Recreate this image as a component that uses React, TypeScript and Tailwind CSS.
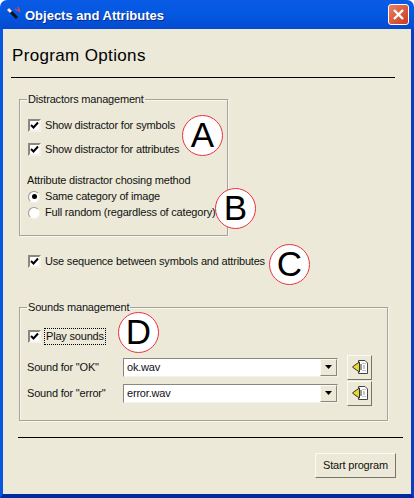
import type { ReactNode } from "react";

function Check({ label, focus }: { label: string; focus?: boolean }) {
  return (
    <div className="flex items-center h-[13px] whitespace-nowrap">
      <div className="w-[13px] h-[13px] shrink-0 bg-white border-2 border-t-[#8a887c] border-l-[#8a887c] border-r-[#f4f2ea] border-b-[#f4f2ea] flex items-center justify-center">
        <svg width="9" height="9" viewBox="0 0 9 9" className="shrink-0">
          <path d="M1 4 L3.5 6.5 L8 1.5" fill="none" stroke="#000" strokeWidth="2" />
        </svg>
      </div>
      <span className={focus ? "ml-[3px] px-[1px] border border-dotted border-black leading-[15px]" : "ml-[4px]"}>{label}</span>
    </div>
  );
}

function Radio({ label, on }: { label: string; on?: boolean }) {
  return (
    <div className="flex items-center h-[13px] whitespace-nowrap">
      <div className="w-[12px] h-[12px] shrink-0 rounded-full bg-white border border-t-[#9a988c] border-l-[#9a988c] border-r-[#f4f2ea] border-b-[#f4f2ea] flex items-center justify-center">
        {on && <div className="w-[5px] h-[5px] rounded-full bg-black" />}
      </div>
      <span className="ml-[5px]">{label}</span>
    </div>
  );
}

function Group({ title, className, children }: { title: string; className: string; children: ReactNode }) {
  return (
    <fieldset className={"border border-[#a5a398] shadow-[inset_1px_1px_0_#f8f6ee,1px_1px_0_#f8f6ee] " + className}>
      <legend className="-ml-[1px] px-[1px] leading-[14px] whitespace-nowrap">{title}</legend>
      {children}
    </fieldset>
  );
}

function Marker({ letter, className }: { letter: string; className: string }) {
  return (
    <div className={"absolute w-[41px] h-[41px] rounded-full bg-white border-[1.5px] border-[#e8313f] flex items-center justify-center text-[35px] tracking-normal text-black " + className}>
      {letter}
    </div>
  );
}

function SoundRow({ label, file }: { label: string; file: string }) {
  return (
    <div className="flex items-center h-[26px] whitespace-nowrap">
      <span className="w-[96px] shrink-0">{label}</span>
      <div className="w-[215px] h-[19px] shrink-0 bg-white border border-t-[#8a887c] border-l-[#8a887c] border-r-[#f4f2ea] border-b-[#f4f2ea] flex items-center justify-between pl-[3px] pr-0">
        <span>{file}</span>
        <div className="w-[17px] h-[17px] bg-[#ece9d8] border border-t-[#fbfaf4] border-l-[#fbfaf4] border-r-[#8a887c] border-b-[#8a887c] flex items-center justify-center">
          <svg width="7" height="4" viewBox="0 0 7 4"><path d="M0 0H7L3.5 4Z" fill="#000" /></svg>
        </div>
      </div>
      <div className="ml-[9px] w-[25px] h-[25px] shrink-0 bg-[#ece9d8] border border-t-[#fbfaf4] border-l-[#fbfaf4] border-r-[#77756a] border-b-[#77756a] flex items-center justify-center">
        <svg width="16" height="14" viewBox="0 0 16 14">
          <path d="M6.5 .5H13L15.5 3V13.5H6.5Z" fill="#fff" stroke="#444" />
          <path d="M11 3V4M13 3V4M11 6H13M11 8H13M11 10V11M13 10V11" stroke="#888" />
          <path d="M.5 7L3 5L7.5 2V12L3 9Z" fill="#e8d62c" stroke="#333" />
          <path d="M9 4V10" stroke="#333" />
        </svg>
      </div>
    </div>
  );
}

export default function App() {
  return (
    <div className="relative w-[414px] h-[498px] overflow-hidden rounded-t-[7px] font-['Liberation_Sans',sans-serif] text-[11px] tracking-[-0.19px] text-[#111] flex flex-col">
      <div className="h-[29px] shrink-0 flex items-center pl-[6px] pr-[5px] bg-gradient-to-b from-[#0a5ae6] via-[#0458e0] to-[#0349cf]">
        <svg width="17" height="17" viewBox="0 0 17 17" className="shrink-0">
          <path d="M2 3L11 12" stroke="#111" strokeWidth="3" />
          <path d="M2 3L5 6" stroke="#eee" strokeWidth="3" />
          <path d="M9 3L13 5M12 1L14 6" stroke="#d9485c" strokeWidth="1.2" />
        </svg>
        <span className="ml-[2px] mt-[2px] font-bold text-[13px] tracking-normal text-white [text-shadow:1px_1px_0_#0b2a8a]">Objects and Attributes</span>
        <div className="ml-auto w-[21px] h-[21px] rounded-[3px] border border-white bg-gradient-to-br from-[#e8805f] to-[#c9381f] flex items-center justify-center">
          <svg width="13" height="13" viewBox="0 0 13 13">
            <path d="M2 2L11 11M11 2L2 11" stroke="#fff" strokeWidth="2.4" />
          </svg>
        </div>
      </div>

      <div className="h-[469px] shrink-0 bg-[#ece9d8] border-l-[3px] border-l-[#0855e0] border-r-[3px] border-r-[#0a3fc0] border-b-[4px] border-b-[#002a9f] px-[8px] flex flex-col">
        <h1 className="mt-[17px] ml-[1px] text-[17px] tracking-[0.35px] leading-[20px] text-black">Program Options</h1>
        <div className="mt-[11px] w-[384px] h-px bg-black" />

        <Group title="Distractors management" className="ml-[8px] mt-[14px] w-[209px] h-[144px] pl-[8px]">
          <div className="mt-[13px] flex flex-col gap-[11px]">
            <Check label="Show distractor for symbols" />
            <Check label="Show distractor for attributes" />
          </div>
          <div className="mt-[17px] -ml-[1px] leading-[14px] whitespace-nowrap">Attribute distractor chosing method</div>
          <div className="mt-[3px] flex flex-col gap-[3px]">
            <Radio label="Same category of image" on />
            <Radio label="Full random (regardless of category)" />
          </div>
        </Group>

        <div className="ml-[17px] mt-[19px]">
          <Check label="Use sequence between symbols and attributes" />
        </div>

        <Group title="Sounds management" className="ml-[8px] mt-[32px] w-[369px] h-[121px] pl-[8px]">
          <div className="mt-[16px]">
            <Check label="Play sounds" focus />
          </div>
          <div className="mt-[11px] -ml-[1px] flex flex-col">
            <SoundRow label='Sound for "OK"' file="ok.wav" />
            <SoundRow label='Sound for "error"' file="error.wav" />
          </div>
        </Group>

        <div className="mt-[16px] ml-[7px] w-[385px] h-px bg-black" />
        <div className="mt-[15px] flex justify-end pr-[7px]">
          <button className="w-[81px] h-[25px] bg-[#ece9d8] border border-t-[#fbfaf4] border-l-[#fbfaf4] border-r-[#77756a] border-b-[#77756a] text-[11px]">
            Start program
          </button>
        </div>
      </div>

      <Marker letter="A" className="left-[182px] top-[115px]" />
      <Marker letter="B" className="left-[215px] top-[188px]" />
      <Marker letter="C" className="left-[269px] top-[244px]" />
      <Marker letter="D" className="left-[118px] top-[312px]" />
    </div>
  );
}
